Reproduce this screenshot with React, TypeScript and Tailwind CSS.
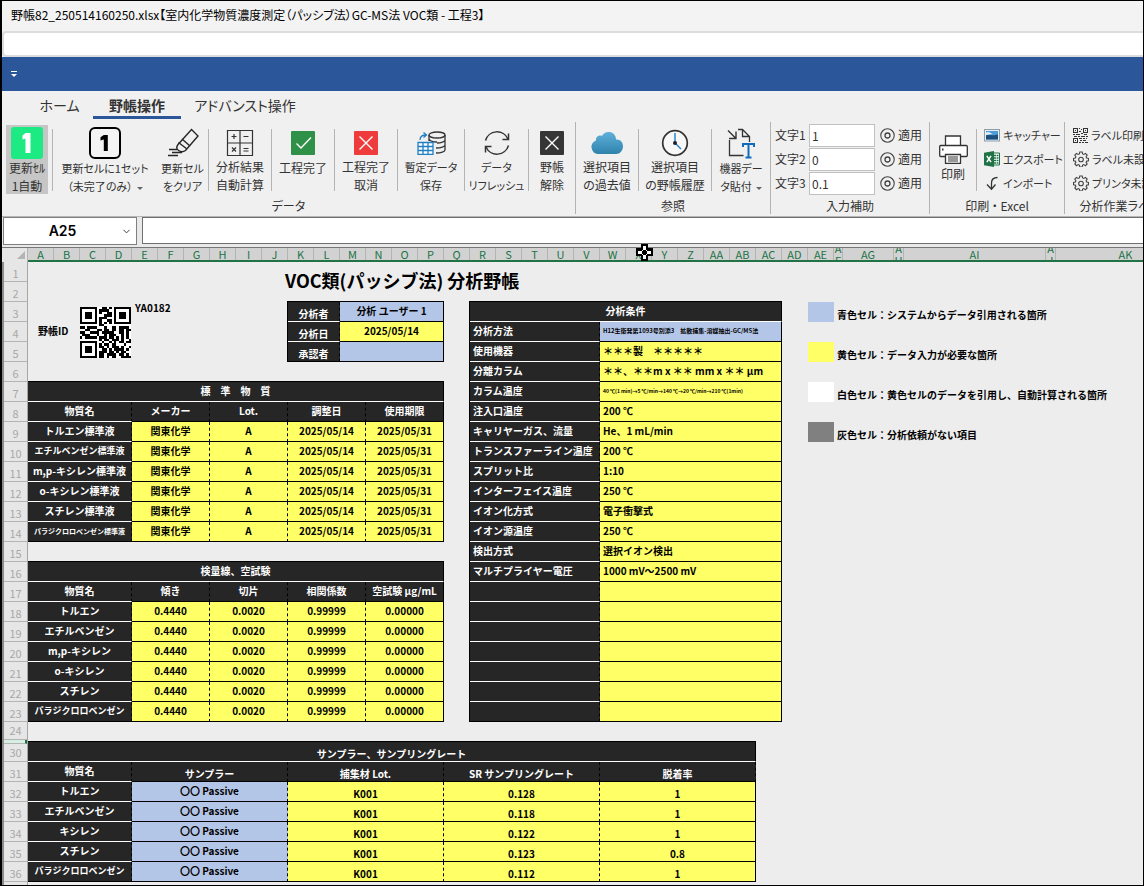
import type { ReactNode } from "react";
import { ChevronDown } from "lucide-react";

/* ---------- icons ---------- */

function IconOneGreen() {
  return (
    <svg className="size-8" viewBox="0 0 32 32">
      <rect width="32" height="32" rx="3" fill="#1eea83" />
      <path d="M14.5 6h5v20h-5V11.5l-3 1V8.6z" fill="#fff" />
    </svg>
  );
}

function IconOneBox() {
  return (
    <svg className="size-8" viewBox="0 0 32 32">
      <rect x="1" y="1" width="30" height="30" rx="5" fill="#f4f4f4" stroke="#000" strokeWidth="2" />
      <path d="M14.8 8h4v16h-4V12.6l-3.3 1v-3.4z" fill="#000" />
    </svg>
  );
}

function IconEraser() {
  return (
    <svg className="size-8" viewBox="0 0 32 32" fill="none" stroke="#262626" strokeWidth="1.4">
      <path d="M24.5 2.5 31 9 18.500 23.500c-2 1.500-5 1.500-7 0s-2-4-.5-6z" />
      <path d="M11.500 15.500 20 22M15 12l8 7" />
      <path d="M2 22.500h8M5 25.500h10M1 28.500h10" strokeWidth="1.600" />
    </svg>
  );
}

function IconCalc() {
  return (
    <svg className="size-[28px]" viewBox="0 0 28 28" fill="none" stroke="#333" strokeWidth="1">
      <path d="M1.500 1.500h25v25h-25zM14 1.500v25M1.500 14h25" strokeWidth="1.200" />
      <path d="M5.500 7.500h5M8 5v5M17.500 7.500h5M6 18.500l4 4M10 18.500l-4 4M17.500 19.500h5M17.500 22h5" strokeWidth="1.200" />
    </svg>
  );
}

function IconCheckGreen() {
  return (
    <svg className="size-6" viewBox="0 0 24 24">
      <rect width="24" height="24" rx="1" fill="#2f9048" />
      <path d="M5.500 12.500 10 17 20 6.500" fill="none" stroke="#fff" strokeWidth="1.400" />
    </svg>
  );
}

function IconCross({ fill }: { fill: string }) {
  return (
    <svg className="size-6" viewBox="0 0 24 24">
      <rect width="24" height="24" rx="1" fill={fill} />
      <path d="M5.500 5.500l13 13M18.500 5.500l-13 13" fill="none" stroke="#fff" strokeWidth="1.400" />
    </svg>
  );
}

function IconSaveDb() {
  return (
    <svg className="h-6 w-[29px]" viewBox="0 0 29 24" fill="none">
      <g stroke="#333" strokeWidth="1.300">
        <ellipse cx="20" cy="4" rx="8" ry="3" />
        <path d="M12 4v6M28 4v15c0 1.500-4 3-9 3M28 9c0 1.500-4 3-8 3M28 14c0 1.500-4 3-9 3M12 8c1 2 4 3 8 3" />
      </g>
      <path d="M1 11.500h15v12H1zM1 15.500h15M1 19.500h15M6 11.500v12M11 11.500v12" fill="#fff" stroke="#1f7fc4" strokeWidth="1.300" />
      <path d="M3 9c0-3 1.500-5 6-5M6.500 1.500 9.500 4l-3 2.500" stroke="#1f7fc4" strokeWidth="1.300" />
    </svg>
  );
}

function IconRefresh() {
  return (
    <svg className="size-[26px]" viewBox="0 0 26 26" fill="none" stroke="#333" strokeWidth="1.500">
      <path d="M1.500 10.500A12 12 0 0 1 24 9M24.500 15.500A12 12 0 0 1 2 17" />
      <path d="M24.500 3.500V9.500h-6M1.500 22.500v-6h6" />
    </svg>
  );
}

function IconCloud() {
  return (
    <svg className="h-6 w-[34px]" viewBox="0 0 34 24">
      <defs>
        <linearGradient id="cloud" x1="0" y1="0" x2="0" y2="1">
          <stop offset="0" stopColor="#5fb0dc" />
          <stop offset="1" stopColor="#2f83ab" />
        </linearGradient>
      </defs>
      <path
        d="M8 23a7 7 0 0 1-2-13.500C5.500 6 9 3.500 12 5c1-2.500 4-4.500 7.500-4 4 .5 6.500 3.500 6.500 7.500 4-.5 7 2.500 7 6.500 0 4.500-3 8-7 8z"
        fill="url(#cloud)"
      />
    </svg>
  );
}

function IconClock() {
  return (
    <svg className="size-[28px]" viewBox="0 0 28 28" fill="none">
      <circle cx="14" cy="14" r="12.300" fill="#f8f8f8" stroke="#333" strokeWidth="1.700" />
      <path d="M14 4v10l6 6" stroke="#1f7fc4" strokeWidth="1.400" />
      <circle cx="14" cy="14" r="2" fill="#222" />
    </svg>
  );
}

function IconPasteText() {
  return (
    <svg className="h-8 w-[28px]" viewBox="0 0 28 32" fill="none">
      <path d="M11 2.500h4.500l7 7V15M15.500 2.500v7h7M2.500 13v15.500h14" stroke="#333" strokeWidth="1.300" />
      <path d="M1 3.500l8 8M9 4.500v7H2" stroke="#333" strokeWidth="1.400" />
      <path d="M16 20v-3h11v3M21.500 17v13M18.500 30.500h6" stroke="#0f6cbd" strokeWidth="2" />
    </svg>
  );
}

function IconTarget() {
  return (
    <svg className="size-[15px]" viewBox="0 0 15 15" fill="none" stroke="#444">
      <circle cx="7.500" cy="7.500" r="6.700" strokeWidth="1.100" />
      <circle cx="7.500" cy="7.500" r="2.500" strokeWidth="1.300" />
    </svg>
  );
}

function IconPrinter() {
  return (
    <svg className="size-[29px]" viewBox="0 0 29 29" fill="#fff" stroke="#333" strokeWidth="1.300">
      <path d="M6.500 10.500V1h15v9.500" />
      <rect x="0.700" y="10.500" width="27.600" height="11" rx="1" />
      <path d="M6.500 19.500h15V28.300h-15z" />
      <path d="M9 22h10M9 24h10M9 26h10" strokeWidth="1" />
      <path d="M3 14.500h1.500" strokeWidth="1.800" />
    </svg>
  );
}

function IconPicture() {
  return (
    <svg className="size-4" viewBox="0 0 16 16">
      <rect x="0.500" y="2.500" width="15" height="11.500" fill="#e8eef4" stroke="#8d9cab" />
      <rect x="2" y="4" width="12" height="8.500" fill="#4f9bd8" />
      <path d="M2 8.500c3-2 6 1 12-1v5H2z" fill="#1f4f7d" />
      <path d="M2 5.500c3-2 6 2 7 1.500L2 8z" fill="#dff1fb" />
    </svg>
  );
}

function IconExcel() {
  return (
    <svg className="size-4" viewBox="0 0 16 16">
      <path d="M9 2h6.500v12H9z" fill="#fff" stroke="#1f7246" />
      <path d="M10 4.500h4.500M10 7h4.500M10 9.500h4.500M10 12h4.500" stroke="#1f7246" strokeWidth="1.500" strokeDasharray="2 .6" />
      <path d="M0 1.800 10 0v16L0 14.200z" fill="#1f7246" />
      <path d="M2.800 4.800 7 11.200M7 4.800l-4.200 6.400" stroke="#fff" strokeWidth="1.500" />
    </svg>
  );
}

function IconImport() {
  return (
    <svg className="size-4" viewBox="0 0 16 16" fill="none" stroke="#333" strokeWidth="1.300">
      <path d="M13.500 2.500C9.500 2.500 7.500 4.500 7.500 8v6M3 9.500l4.500 4.700 4-4.700" />
    </svg>
  );
}

function IconGear() {
  return (
    <svg className="size-4" viewBox="0 0 16 16" fill="none" stroke="#444" strokeWidth="1.100">
      <path d="M6.800 1h2.400l.4 1.900 1.300.5 1.600-1 1.700 1.700-1.100 1.600.6 1.300 1.800.4v2.300l-1.800.4-.6 1.300 1.100 1.600-1.700 1.700-1.600-1.100-1.300.6-.4 1.800H6.800l-.4-1.800-1.300-.6-1.600 1.100L1.800 13l1.100-1.600-.6-1.300-1.800-.4V7.400L2.300 7l.6-1.300-1.100-1.600 1.700-1.700 1.600 1 1.300-.5z" />
      <circle cx="8" cy="8.500" r="2.300" />
    </svg>
  );
}

const QR = [
  "#######..##.#.#######",
  "#.....#.####..#.....#",
  "#.###.#.#..##.#.###.#",
  "#.###.#...###.#.###.#",
  "#.###.#.###...#.###.#",
  "#.....#.#..##.#.....#",
  "#######.#.#.#.#######",
  "........##...........",
  "##.####...#..##.####.",
  "..##...##.##.##.##.##",
  "##..####.#####..##.#.",
  ".###...#..#.###..#.#.",
  "#.#####.###.##.#.#.#.",
  "........#.##.###.#..#",
  "#######..#..#.#.##.##",
  "#.....#.#.##.##...#..",
  "#.###.#.##.#.###.#..#",
  "#.###.#..##.#.####.#.",
  "#.###.#.###.##.#.##..",
  "#.....#.##.####.##.#.",
  "#######.##.#.##..####",
];

function QrCode({ className }: { className: string }) {
  return (
    <svg className={className} viewBox="0 0 21 21" shapeRendering="crispEdges">
      <rect width="21" height="21" fill="#fff" />
      {QR.map((line, y) =>
        line.split("").map((c, x) => (c === "#" ? <rect key={`${x}-${y}`} x={x} y={y} width="1" height="1" fill="#000" /> : null)),
      )}
    </svg>
  );
}

function IconQrSmall() {
  return (
    <svg className="size-[15px]" viewBox="0 0 15 15" fill="none" stroke="#333" shapeRendering="crispEdges">
      <path d="M.5 .5h4v4h-4zM10.500 .5h4v4h-4zM.5 10.500h4v4h-4z" />
      <path d="M2 2.500h1M12 2.500h1M2 12.500h1M6 .5h1M8 1.500h1M6 3.500h2M8 5.500h2M0 6.500h2M3 6.500h4M11 6.500h3M1 8.500h3M5 8.500h2M8 8.500h4M13 8.500h2M6 10.500h3M10 10.500h2M13 10.500h1M7 12.500h2M10 12.500h3M6 14.500h2M9 14.500h2M12 14.500h3" />
    </svg>
  );
}

function CursorCross() {
  return (
    <svg className="absolute -top-1 left-[10px] z-10 size-[17px]" viewBox="0 0 17 17" shapeRendering="crispEdges">
      <path d="M5 0h7v4h5v8h-5v5H5v-5H0V4h5z" fill="#000" />
      <path d="M7 2h3v4H7zM2 7h4v3H2zM11 7h4v3h-4zM7 11h3v4H7zM6 6h1v1H6zM10 6h1v1h-1zM6 10h1v1H6zM10 10h1v1h-1z" fill="#fff" />
    </svg>
  );
}

/* ---------- ribbon ---------- */

function Separator() {
  return <div className="mt-1 h-[62px] w-px shrink-0 bg-[#b4b4b4]" />;
}

type RibbonButtonProps = {
  icon: ReactNode;
  lines: string[];
  width: string;
  size?: string;
  active?: boolean;
  arrow?: boolean;
};

function RibbonButton({ icon, lines, width, size, active, arrow }: RibbonButtonProps) {
  return (
    <button
      type="button"
      className={`flex h-[69px] shrink-0 flex-col items-center pt-[2px] ${width} ${size ?? "text-xs"} ${active ? "bg-[#c6c6c6]" : ""}`}
    >
      <span className="flex h-8 items-center">{icon}</span>
      {lines.map((line, i) => (
        <span key={line} className="flex items-center gap-1 leading-[18px] whitespace-nowrap">
          {line}
          {arrow && i === lines.length - 1 && <span className="mt-1 border-x-[3px] border-t-[3px] border-x-transparent border-t-[#666]" />}
        </span>
      ))}
    </button>
  );
}

function RibbonGroup({ label, className, children }: { label: string; className?: string; children: ReactNode }) {
  return (
    <div className={`flex h-[92px] flex-col border-r border-[#b4b4b4] ${className ?? "shrink-0"}`}>
      <div className="flex h-[76px] pt-[3px]">{children}</div>
      <div className="text-center text-xs leading-4 whitespace-nowrap">{label}</div>
    </div>
  );
}

function SmallButton({ icon, label }: { icon: ReactNode; label: string }) {
  return (
    <button type="button" className="flex h-6 items-center gap-[3px] text-[11px] whitespace-nowrap">
      <span className="shrink-0">{icon}</span>
      {label}
    </button>
  );
}

function Ribbon() {
  return (
    <div className="flex h-[95px] overflow-hidden border-b border-[#b5b5b5] bg-[#f0f0f0]">
      <RibbonGroup label="データ">
        <div className="w-1 shrink-0" />
        <RibbonButton width="w-[42px]" icon={<IconOneGreen />} lines={["更新ｾﾙ", "1自動"]} active />
        <div className="w-1 shrink-0" />
        <Separator />
        <RibbonButton width="w-[104px]" size="text-[11px]" icon={<IconOneBox />} lines={["更新セルに1セット", "（未完了のみ）"]} arrow />
        <RibbonButton width="w-[51px]" size="text-[11px]" icon={<IconEraser />} lines={["更新セル", "をクリア"]} />
        <Separator />
        <RibbonButton width="w-[62px]" icon={<IconCalc />} lines={["分析結果", "自動計算"]} />
        <Separator />
        <RibbonButton width="w-[62px]" icon={<IconCheckGreen />} lines={["工程完了"]} />
        <Separator />
        <RibbonButton width="w-[62px]" icon={<IconCross fill="#ee3b3b" />} lines={["工程完了", "取消"]} />
        <Separator />
        <RibbonButton width="w-[66px]" size="text-[11px]" icon={<IconSaveDb />} lines={["暫定データ", "保存"]} />
        <Separator />
        <RibbonButton width="w-[63px]" size="text-[11px]" icon={<IconRefresh />} lines={["データ", "リフレッシュ"]} />
        <Separator />
        <RibbonButton width="w-[46px]" icon={<IconCross fill="#363636" />} lines={["野帳", "解除"]} />
      </RibbonGroup>
      <RibbonGroup label="参照">
        <RibbonButton width="w-[62px]" icon={<IconCloud />} lines={["選択項目", "の過去値"]} />
        <Separator />
        <RibbonButton width="w-[72px]" icon={<IconClock />} lines={["選択項目", "の野帳履歴"]} />
        <Separator />
        <RibbonButton width="w-[58px]" size="text-[11px]" icon={<IconPasteText />} lines={["機器デー", "タ貼付"]} arrow />
      </RibbonGroup>
      <RibbonGroup label="入力補助">
        <div className="-mt-[2px] flex w-[158px] flex-col pl-1">
          {["1", "0", "0.1"].map((value, i) => (
            <div key={value} className="flex h-6 items-center text-xs">
              <label htmlFor={`moji${i}`} className="w-[34px] shrink-0 whitespace-nowrap">
                文字{i + 1}
              </label>
              <input id={`moji${i}`} defaultValue={value} className="h-[23px] w-[66px] border border-[#c0c0c0] bg-white px-[2px]" />
              <button type="button" className="ml-[5px] flex items-center gap-[3px] whitespace-nowrap">
                <IconTarget />
                適用
              </button>
            </div>
          ))}
        </div>
      </RibbonGroup>
      <RibbonGroup label="印刷 ・ Excel">
        <button type="button" className="flex h-[69px] w-[46px] flex-col items-center gap-px pt-[10px] text-xs leading-[18px]">
          <IconPrinter />
          印刷
        </button>
        <Separator />
        <div className="-mt-[2px] flex w-[87px] flex-col pl-[7px]">
          <SmallButton icon={<IconPicture />} label="キャッチャー" />
          <SmallButton icon={<IconExcel />} label="エクスポート" />
          <SmallButton icon={<IconImport />} label="インポート" />
        </div>
      </RibbonGroup>
      <RibbonGroup label="分析作業ラベル" className="w-[112px] shrink-0">
        <div className="-mt-[2px] flex flex-col pl-2">
          <SmallButton icon={<IconQrSmall />} label="ラベル印刷" />
          <SmallButton icon={<IconGear />} label="ラベル未設定" />
          <SmallButton icon={<IconGear />} label="プリンタ未設定" />
        </div>
      </RibbonGroup>
    </div>
  );
}

/* ---------- sheet ---------- */

const letters = "ABCDEFGHIJKLMNOPQRSTUVWXYZ".split("");
const columns = [...letters, "AA", "AB", "AC", "AD", "AE"];
const wideColumns = [
  { name: "AF", width: "w-[9px]" },
  { name: "AG", width: "w-[51px]" },
  { name: "AH", width: "w-[10px]" },
  { name: "AI", width: "w-[142px]" },
  { name: "AJ", width: "w-[10px]" },
  { name: "AK", width: "w-[140px]" },
];

function ColumnHeaders() {
  return (
    <div className="flex h-[15px] border-t border-[#777] bg-[#d2d2d2] text-[11px] leading-[12px] text-[#217346]">
      <div className="flex h-[14px] w-[26px] shrink-0 items-end justify-end border-r border-[#b4b4b4] bg-[#e6e6e6] pr-[2px] pb-[3px]">
        <svg className="size-2" viewBox="0 0 8 8">
          <path d="M8 0v8H0z" fill="#b4b4b4" />
        </svg>
      </div>
      <div className="flex border-b-2 border-[#217346]">
        {columns.map((c) => (
          <div key={c} className="relative w-[26px] shrink-0 border-r border-[#b4b4b4] text-center">
            {c}
            {c === "X" && <CursorCross />}
          </div>
        ))}
        {wideColumns.map((c) => (
          <div key={c.name} className={`flex h-[12px] shrink-0 items-center justify-center overflow-hidden border-r border-[#b4b4b4] text-center break-all ${c.width}`}>
            {c.name}
          </div>
        ))}
      </div>
    </div>
  );
}

const rowsTop = Array.from({ length: 23 }, (_, i) => i + 1);
const rowsBottom = [31, 32, 33, 34, 35, 36];

function RowHeaders() {
  const row = "h-5 border-b border-[#b4b4b4] pt-[3px] text-center leading-[16px]";
  const shortRow = "h-[18px] border-b border-[#b4b4b4] text-center leading-[16px]";
  return (
    <div className="w-[26px] shrink-0 border-r border-l-2 border-r-[#a6a6a6] border-l-[#8c8c8c] bg-[#e6e6e6] text-[11px] text-[#a8a8a8]">
      {rowsTop.map((n) => (
        <div key={n} className={row}>
          {n}
        </div>
      ))}
      <div className={shortRow}>24</div>
      <div className="h-1 border-r-2 border-b border-r-[#217346] border-b-[#b4b4b4] bg-[#d5efe0]" />
      <div className={shortRow}>30</div>
      {rowsBottom.map((n) => (
        <div key={n} className={row}>
          {n}
        </div>
      ))}
    </div>
  );
}

const table = "table-fixed border-separate border-spacing-0 border-t border-black text-[10px] leading-[14px] font-bold whitespace-nowrap";
const dark = "h-5 overflow-hidden border-b border-r bg-[#262626] p-0 pb-[2px] text-white";
const value = "h-5 overflow-hidden border-b border-r border-black p-0 pb-[2px]";
const bottom = "pb-0! align-bottom";

function nameSize(name: string) {
  if (name.length > 12) return "text-[7px]";
  return name.length > 9 && !name.includes("-") ? "text-[9px]" : "text-[10px]";
}

type GridTableProps = { title: string; heads: string[]; names: string[]; rows: string[][] };

function GridTable({ title, heads, names, rows }: GridTableProps) {
  return (
    <table className={`w-[416px] ${table}`}>
      <colgroup>
        <col className="w-[104px]" />
        {heads.slice(1).map((h) => (
          <col key={h} className="w-[78px]" />
        ))}
      </colgroup>
      <thead>
        <tr>
          <th colSpan={5} className={`${dark} border-r-black border-b-white`}>
            {title}
          </th>
        </tr>
        <tr>
          {heads.map((h, i) => (
            <th
              key={h}
              className={`${dark} ${i === 0 ? "border-b-white" : "border-b-black"} ${i === 4 ? "border-r-black" : "[border-right-style:dashed] border-r-black"}`}
            >
              {h}
            </th>
          ))}
        </tr>
      </thead>
      <tbody>
        {names.map((name, r) => (
          <tr key={name}>
            <th className={`${dark} [border-right-style:dashed] border-r-black ${r === names.length - 1 ? "border-b-black" : "border-b-white"} ${nameSize(name)}`}>
              {name}
            </th>
            {rows[r].map((v, i) => (
              <td key={i} className={`${value} bg-[#ffff66] text-center ${i === 3 ? "" : "[border-right-style:dashed]"}`}>
                {v}
              </td>
            ))}
          </tr>
        ))}
      </tbody>
    </table>
  );
}

const standards = ["トルエン標準液", "エチルベンゼン標準液", "m,p-キシレン標準液", "o-キシレン標準液", "スチレン標準液", "パラジクロロベンゼン標準液"];
const compounds = ["トルエン", "エチルベンゼン", "m,p-キシレン", "o-キシレン", "スチレン", "パラジクロロベンゼン"];

const samplers = [
  ["トルエン", "0.128", "1"],
  ["エチルベンゼン", "0.118", "1"],
  ["キシレン", "0.122", "1"],
  ["スチレン", "0.123", "0.8"],
  ["パラジクロロベンゼン", "0.112", "1"],
];

const conditions = [
  ["分析方法", "H12生衛発第1093号別添3　拡散捕集-溶媒抽出-GC/MS法"],
  ["使用機器", "＊＊＊製　＊＊＊＊＊"],
  ["分離カラム", "＊＊、＊＊m x ＊＊ mm x ＊＊ μm"],
  ["カラム温度", "40 ℃(1 min)→5 ℃/min→140 ℃→20 ℃/min→210 ℃(1min)"],
  ["注入口温度", "200 ℃"],
  ["キャリヤーガス、流量", "He、1 mL/min"],
  ["トランスファーライン温度", "200 ℃"],
  ["スプリット比", "1:10"],
  ["インターフェイス温度", "250 ℃"],
  ["イオン化方式", "電子衝撃式"],
  ["イオン源温度", "250 ℃"],
  ["検出方式", "選択イオン検出"],
  ["マルチプライヤー電圧", "1000 mV～2500 mV"],
  ["", ""],
  ["", ""],
  ["", ""],
  ["", ""],
  ["", ""],
  ["", ""],
  ["", ""],
];

const analyst = [
  { label: "分析者", text: "分析 ユーザー 1", fill: "bg-[#b4c6e7]" },
  { label: "分析日", text: "2025/05/14", fill: "bg-[#ffff66]" },
  { label: "承認者", text: "", fill: "bg-[#b4c6e7]" },
];

const legend = [
  { fill: "bg-[#b4c6e7]", text: "青色セル：システムからデータ引用される箇所" },
  { fill: "bg-[#ffff66]", text: "黄色セル：データ入力が必要な箇所" },
  { fill: "bg-white", text: "白色セル：黄色セルのデータを引用し、自動計算される箇所" },
  { fill: "bg-[#808080]", text: "灰色セル：分析依頼がない項目" },
];

function AnalystTable() {
  return (
    <table className={`w-[157px] border-l ${table}`}>
      <colgroup>
        <col className="w-[52px]" />
        <col className="w-[104px]" />
      </colgroup>
      <tbody>
        {analyst.map((a, i) => (
          <tr key={a.label}>
            <th className={`${dark} ${bottom} [border-right-style:dashed] border-r-black ${i === 2 ? "border-b-black" : "border-b-white"}`}>{a.label}</th>
            <td className={`${value} ${a.fill} text-center`}>{a.text}</td>
          </tr>
        ))}
      </tbody>
    </table>
  );
}

function ConditionTable() {
  return (
    <table className={`w-[313px] shrink-0 border-l ${table}`}>
      <colgroup>
        <col className="w-[130px]" />
        <col className="w-[182px]" />
      </colgroup>
      <thead>
        <tr>
          <th colSpan={2} className={`${dark} border-r-black border-b-white`}>
            分析条件
          </th>
        </tr>
      </thead>
      <tbody>
        {conditions.map(([label, text], i) => (
          <tr key={i}>
            <th className={`${dark} [border-right-style:dashed] border-r-black pl-[3px] text-left ${i === conditions.length - 1 ? "border-b-black" : "border-b-white"}`}>
              {label}
            </th>
            <td
              className={`${value} pl-[3px] ${i === 0 ? "bg-[#b4c6e7]" : "bg-[#ffff66]"} ${i === 0 ? "text-[6px]" : i === 3 ? "text-[5px]" : ""}`}
            >
              {text}
            </td>
          </tr>
        ))}
      </tbody>
    </table>
  );
}

function SamplerTable() {
  return (
    <table className={`w-[728px] ${table}`}>
      <colgroup>
        <col className="w-[104px]" />
        <col className="w-[156px]" />
        <col className="w-[156px]" />
        <col className="w-[156px]" />
        <col className="w-[156px]" />
      </colgroup>
      <thead>
        <tr>
          <th colSpan={5} className={`${dark} ${bottom} border-r-black border-b-white`}>
            サンプラー、サンプリングレート
          </th>
        </tr>
        <tr>
          <th className={`${dark} [border-right-style:dashed] border-r-black border-b-white`}>物質名</th>
          {["サンプラー", "捕集材 Lot.", "SR サンプリングレート", "脱着率"].map((h) => (
            <th key={h} className={`${dark} ${bottom} [border-right-style:dashed] border-black`}>
              {h}
            </th>
          ))}
        </tr>
      </thead>
      <tbody>
        {samplers.map(([name, rate, ratio], i) => (
          <tr key={name}>
            <th className={`${dark} [border-right-style:dashed] border-r-black ${i === 4 ? "border-b-black" : "border-b-white"} ${nameSize(name)}`}>{name}</th>
            <td className={`${value} [border-right-style:dashed] bg-[#b4c6e7] text-center`}>〇〇 Passive</td>
            <td className={`${value} ${bottom} [border-right-style:dashed] bg-[#ffff66] text-center`}>K001</td>
            <td className={`${value} ${bottom} [border-right-style:dashed] bg-[#ffff66] text-center`}>{rate}</td>
            <td className={`${value} ${bottom} bg-[#ffff66] text-center`}>{ratio}</td>
          </tr>
        ))}
      </tbody>
    </table>
  );
}

function Sheet() {
  return (
    <div className="flex flex-1 overflow-hidden bg-[#ededed] text-black [font-feature-settings:normal]">
      <RowHeaders />
      <div className="flex min-w-0 flex-1 flex-col gap-[19px]">
        <div>
          <h1 className="h-[39px] pl-[257px] text-lg leading-[37px] font-bold whitespace-nowrap">VOC類(パッシブ法) 分析野帳</h1>
          <div className="flex items-start">
            <div className="flex w-[416px] shrink-0 flex-col gap-[19px]">
              <div className="flex h-[61px] items-start justify-between text-[10px] font-bold">
                <div className="flex pl-[10px]">
                  <span className="w-[42px] leading-[60px]">野帳ID</span>
                  <QrCode className="mt-[6px] size-[51px]" />
                  <span className="ml-1 leading-[14px]">YA0182</span>
                </div>
                <AnalystTable />
              </div>
              <GridTable
                title="標　準　物　質"
                heads={["物質名", "メーカー", "Lot.", "調整日", "使用期限"]}
                names={standards}
                rows={standards.map(() => ["関東化学", "A", "2025/05/14", "2025/05/31"])}
              />
              <GridTable
                title="検量線、空試験"
                heads={["物質名", "傾き", "切片", "相関係数", "空試験 μg/mL"]}
                names={compounds}
                rows={compounds.map(() => ["0.4440", "0.0020", "0.99999", "0.00000"])}
              />
            </div>
            <div className="w-[25px] shrink-0" />
            <ConditionTable />
            <ul className="mt-px ml-[26px] flex flex-col gap-5">
              {legend.map((l) => (
                <li key={l.text} className="flex h-5 items-end gap-[3px] text-[10px] leading-[14px] font-bold whitespace-nowrap">
                  <span className={`h-5 w-[26px] shrink-0 ${l.fill}`} />
                  {l.text}
                </li>
              ))}
            </ul>
          </div>
        </div>
        <SamplerTable />
      </div>
    </div>
  );
}

/* ---------- window ---------- */

function Tabs() {
  return (
    <nav className="flex h-[31px] bg-[#f0f0f0] text-sm whitespace-nowrap">
      <button type="button" className="ml-6 h-7 w-[67px]">
        ホーム
      </button>
      <button type="button" className="h-7 w-[88px] border-b-[3px] border-[#2b579a] pt-[3px] font-bold">
        野帳操作
      </button>
      <button type="button" className="h-7 w-[128px]">
        アドバンスト操作
      </button>
    </nav>
  );
}

function FormulaBar() {
  return (
    <div className="flex h-[30px] items-start gap-[5px] bg-[#e9e9e9] pl-px">
      <div className="flex h-7 w-[134px] shrink-0 items-center border border-[#808080] bg-white pr-1">
        <input aria-label="名前ボックス" defaultValue="A25" className="w-0 flex-1 text-center font-['Inter',sans-serif] text-sm font-semibold text-black" />
        <button type="button" aria-label="名前の一覧">
          <ChevronDown className="size-[11px]" strokeWidth={2} />
        </button>
      </div>
      <input aria-label="数式バー" className="h-[27px] min-w-0 flex-1 border border-r-0 border-[#707070] bg-white px-2" />
    </div>
  );
}

export default function App() {
  return (
    <div className="flex min-h-screen flex-col overflow-hidden border-y border-r border-l-2 border-black bg-[#f0f0f0] font-['Noto_Sans_CJK_JP',sans-serif] text-[#333] [font-feature-settings:'palt']">
      <header className="h-[30px] bg-[#f3f3f3] pl-[9px] text-xs leading-[27px] whitespace-nowrap text-black">
        野帳82_250514160250.xlsx【室内化学物質濃度測定（パッシブ法）GC-MS法 VOC類 - 工程3】
      </header>
      <input aria-label="検索" className="h-[26px] rounded-l border-2 border-r-0 border-[#dcdcdc] bg-white px-2" />
      <div className="flex h-[34px] items-center bg-[#2b579a] pl-[9px]">
        <button type="button" aria-label="クイックアクセス" className="flex flex-col items-center gap-[2px]">
          <span className="h-px w-[6px] bg-white" />
          <span className="border-x-[3px] border-t-[3px] border-x-transparent border-t-white" />
        </button>
      </div>
      <Tabs />
      <Ribbon />
      <FormulaBar />
      <ColumnHeaders />
      <Sheet />
    </div>
  );
}
